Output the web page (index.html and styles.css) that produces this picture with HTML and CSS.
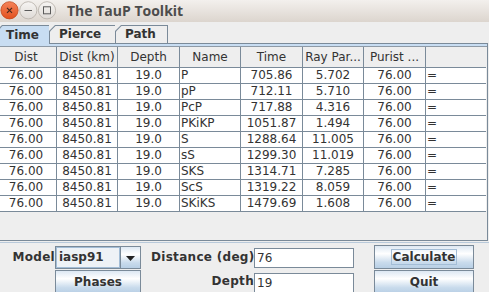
FILE: index.html
```html
<!DOCTYPE html>
<html lang="en">
<head>
    <meta charset="UTF-8">
    <title>The TauP Toolkit</title>
    <link rel="stylesheet" href="styles.css">
</head>
<body>
    <div class="window">
        <div class="titlebar">
            <svg class="winbtns" width="60" height="22" viewBox="0 0 60 22">
                <defs>
                    <linearGradient id="closeg" x1="0" y1="0" x2="0" y2="1">
                        <stop offset="0" stop-color="#f5845a"/>
                        <stop offset="1" stop-color="#e2511e"/>
                    </linearGradient>
                    <linearGradient id="greyg" x1="0" y1="0" x2="0" y2="1">
                        <stop offset="0" stop-color="#f7f5f3"/>
                        <stop offset="1" stop-color="#dedad6"/>
                    </linearGradient>
                </defs>
                <circle cx="9.5" cy="10.3" r="8.6" fill="url(#closeg)" stroke="#c4491c" stroke-width="0.8"/>
                <path d="M7 7.8 L12 12.8 M12 7.8 L7 12.8" stroke="#4a2a1e" stroke-width="1.2"/>
                <circle cx="28.3" cy="10.3" r="8.6" fill="url(#greyg)" stroke="#b5aea7" stroke-width="0.8"/>
                <path d="M24.5 10.5 H32" stroke="#5a5a5a" stroke-width="1"/>
                <circle cx="47" cy="10.3" r="8.6" fill="url(#greyg)" stroke="#b5aea7" stroke-width="0.8"/>
                <rect x="43.5" y="6.8" width="7" height="7" fill="none" stroke="#5a5a5a" stroke-width="1"/>
            </svg>
            <div class="title">The TauP Toolkit</div>
        </div>

        <div class="tabbed">
            <div class="tabs">
                <div class="tab active"><span>Time</span></div>
                <div class="tab"><span>Pierce</span></div>
                <div class="tab last"><span>Path</span></div>
                <div class="tab-fill"></div>
            </div>
            <div class="pane">
                <div class="stripe"></div>
                <div class="scroll">
                    <table class="results">
                        <thead>
                            <tr>
                                <th class="c1">Dist</th>
                                <th class="c2">Dist (km)</th>
                                <th class="c3">Depth</th>
                                <th class="c4">Name</th>
                                <th class="c5">Time</th>
                                <th class="c6">Ray Par...</th>
                                <th class="c7">Purist ...</th>
                                <th class="c8"></th>
                            </tr>
                        </thead>
                        <tbody id="rows"></tbody>
                    </table>
                </div>
            </div>
        </div>

        <div class="controls">
            <div class="label model-label">Model</div>
            <div class="combo">
                <div class="combo-value">iasp91</div>
                <div class="combo-arrow">
                    <svg width="9" height="5" viewBox="0 0 9 5"><path d="M0 0 H9 L4.5 5 Z" fill="#222"/></svg>
                </div>
            </div>
            <div class="label dist-label">Distance (deg)</div>
            <input class="field" type="text" value="76">
            <button class="btn calc"><span class="focus">Calculate</span></button>

            <button class="btn phases">Phases</button>
            <div class="label depth-label">Depth</div>
            <input class="field depth-field" type="text" value="19">
            <button class="btn quit">Quit</button>
        </div>
    </div>

    <script>
        // arrivals for iasp91, 76 deg, 19 km
        const arrivals = [
            ["P", "705.86", "5.702"],
            ["pP", "712.11", "5.710"],
            ["PcP", "717.88", "4.316"],
            ["PKiKP", "1051.87", "1.494"],
            ["S", "1288.64", "11.005"],
            ["sS", "1299.30", "11.019"],
            ["SKS", "1314.71", "7.285"],
            ["ScS", "1319.22", "8.059"],
            ["SKiKS", "1479.69", "1.608"]
        ];

        const tbody = document.getElementById("rows");

        arrivals.forEach(a => {
            const tr = document.createElement("tr");
            tr.innerHTML = `
                <td class="num">76.00</td>
                <td class="num">8450.81</td>
                <td class="num">19.0</td>
                <td class="txt">${a[0]}</td>
                <td class="num">${a[1]}</td>
                <td class="num">${a[2]}</td>
                <td class="num">76.00</td>
                <td class="txt">=</td>
            `;
            tbody.appendChild(tr);
        });
    </script>
</body>
</html>
```

FILE: styles.css
```css
* {
    box-sizing: border-box;
}

body {
    margin: 0;
    padding: 0;
    background-color: #eeeeee;
    font-family: "DejaVu Sans", sans-serif;
    font-size: 12px;
    color: #333333;
    overflow: hidden;
}

.window {
    width: 489px;
    height: 292px;
    overflow: hidden;
}

/* title bar */
.titlebar {
    display: flex;
    align-items: center;
    height: 22px;
    background: linear-gradient(to bottom, #f3f0ed, #dcd5ce);
}

.winbtns {
    display: block;
    flex: none;
}

.title {
    margin-left: 7px;
    font-family: "Open Sans", sans-serif;
    font-weight: bold;
    font-size: 14px;
    color: #4c4c4c;
    line-height: 20px;
}

/* tabs */
.tabbed {
    width: 488px;
    margin-top: 3px;
}

.tabs {
    display: flex;
    height: 19px;
    margin-left: -4px;
}

.tab {
    background-color: #7a8a99;
    padding: 1px 0 1px 1px;
    clip-path: polygon(6px 0, 100% 0, 100% 100%, 0 100%, 0 6px);
    font-weight: bold;
}

.tab span {
    display: block;
    height: 100%;
    padding-left: 9px;
    line-height: 17px;
    background-color: #eeeeee;
    clip-path: polygon(5.5px 0, 100% 0, 100% 100%, 0 100%, 0 5.5px);
}

.tab.active {
    width: 53px;
    padding-bottom: 0;
}

.tab.active span {
    background-color: #c8ddf2;
    line-height: 18px;
}

.tab:nth-child(2) {
    width: 66px;
}

.tab.last {
    width: 53px;
    padding-right: 1px;
}

.tab-fill {
    flex: 1;
    border-bottom: 1px solid #7a8a99;
}

.pane {
    border-right: 1px solid #7a8a99;
}

.stripe {
    height: 2px;
    background-color: #c8ddf2;
}

.scroll {
    height: 195px;
    overflow: hidden;
    border-top: 1px solid #8e9aa6;
    border-bottom: 1px solid #7a8a99;
}

/* table */
.results {
    width: 490px;
    margin-left: -4px;
    table-layout: fixed;
    border-collapse: separate;
    border-spacing: 0;
}

.results th {
    height: 20px;
    padding: 1px 0 0 0;
    font-weight: normal;
    text-align: center;
    white-space: nowrap;
    overflow: hidden;
    background-color: #eeeeee;
    border-right: 1px solid #7a8a99;
    border-bottom: 1px solid #7a8a99;
    line-height: 19px;
}

.results td {
    height: 16px;
    padding: 0 1px;
    line-height: 15px;
    background-color: #ffffff;
    border-right: 1px solid #7a8a99;
    border-bottom: 1px solid #7a8a99;
    white-space: nowrap;
    overflow: hidden;
}

.results .c1 { width: 61px; }
.results .c2 { width: 61px; }
.results .c3 { width: 62px; }
.results .c4 { width: 61px; }
.results .c5 { width: 62px; }
.results .c6 { width: 61px; }
.results .c7 { width: 62px; }
.results .c8 { width: 60px; }

.results th:last-child,
.results td:last-child {
    border-right: none;
}

.results .num {
    text-align: center;
}

.results .txt {
    text-align: left;
}

/* bottom controls */
.controls {
    display: grid;
    grid-template-columns: 55px 86px 10px 103px 100px 20px 100px;
    grid-template-rows: 23px 23px;
    row-gap: 1px;
    margin-top: 1px;
    padding-top: 3px;
    border-top: 1px solid #b8c9da;
}

.label {
    font-weight: bold;
    text-align: right;
    line-height: 23px;
    letter-spacing: 0.3px;
    white-space: nowrap;
}

.model-label {
    grid-column: 1;
}

.dist-label,
.depth-label {
    grid-column: 4;
}

.combo {
    grid-column: 2;
    display: flex;
    border: 1px solid #7a8a99;
}

.combo-value {
    flex: 1;
    padding-left: 2px;
    font-weight: bold;
    line-height: 19px;
    background-color: #eef2f6;
    border: 1px solid #a3bdd6;
}

.combo-arrow {
    width: 20px;
    display: flex;
    align-items: center;
    justify-content: center;
    border-left: 1px solid #7a8a99;
    background: linear-gradient(to bottom, #dde8f3, #ffffff 35%, #c9dbec 75%, #b8cfe5);
}

.combo-arrow svg {
    display: block;
    margin-top: 1px;
}

.field {
    grid-column: 5;
    align-self: center;
    height: 20px;
    margin: 0;
    padding: 0 2px;
    font-family: "DejaVu Sans", sans-serif;
    font-size: 12px;
    color: #333333;
    background-color: #ffffff;
    border: 1px solid #7a8a99;
    outline: none;
}

.depth-field {
    margin-top: 2px;
}

.btn {
    grid-column: 7;
    margin: 0;
    padding: 0;
    font-family: "DejaVu Sans", sans-serif;
    font-size: 12px;
    font-weight: bold;
    color: #333333;
    border: 1px solid #7a8a99;
    background: linear-gradient(to bottom, #dde8f3, #ffffff 35%, #c9dbec 75%, #b8cfe5);
}

.btn.calc {
    margin-top: -1px;
}

.btn.phases {
    grid-column: 2;
    height: 24px;
}

.btn.quit {
    height: 24px;
}

.focus {
    border: 1px solid #a3bdd6;
    padding: 0 1px;
}
```
